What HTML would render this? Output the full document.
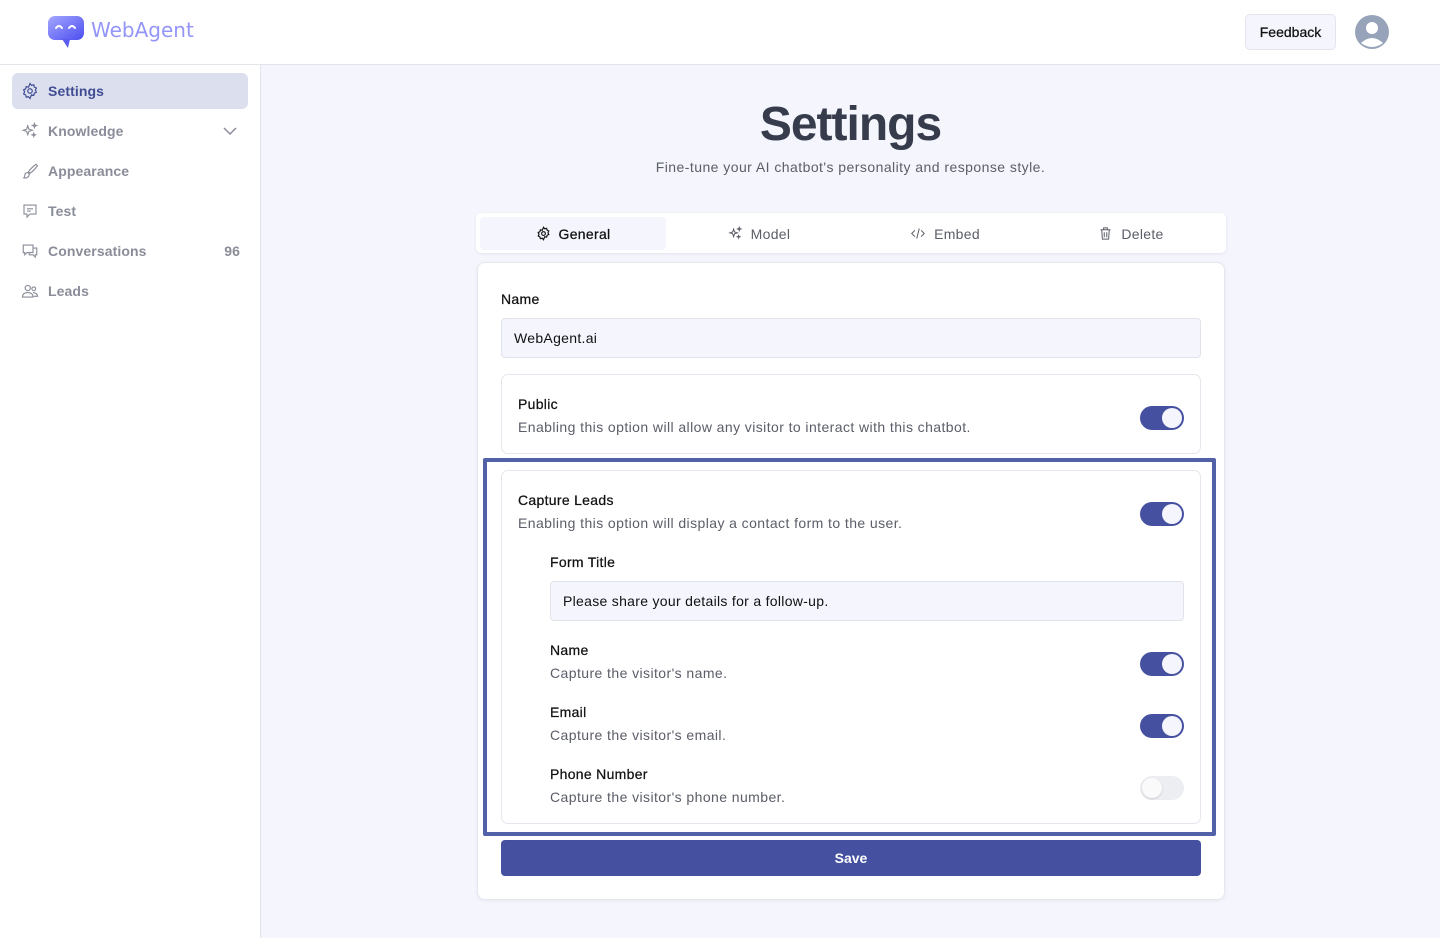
<!DOCTYPE html>
<html><head><style>
*{box-sizing:border-box;margin:0;padding:0}
body{width:1440px;height:938px;font-family:"Liberation Sans",sans-serif;background:#f5f6fd;position:relative;overflow:hidden;color:#111}
.hdr{position:absolute;left:0;top:0;width:1440px;height:65px;background:#fff;border-bottom:1px solid #e3e4ea}
.side{position:absolute;left:0;top:65px;width:261px;height:873px;background:#fff;border-right:1px solid #e3e4ea}
.nav{position:absolute;left:12px;width:236px;height:36px;border-radius:6px;display:flex;align-items:center;padding-left:36px;font-size:14px;color:#8a8d99;font-weight:bold;letter-spacing:.1px}
.nav svg{position:absolute;left:9px;top:9px}
.abs{position:absolute}
.tog{position:absolute;width:44px;height:24px;border-radius:12px;background:#4551a0}
.tog::after{content:"";position:absolute;right:2px;top:2px;width:20px;height:20px;border-radius:50%;background:#f4f5fd}
.tog.off{background:#eceef2}
.tog.off::after{left:2px;right:auto;background:#fafafa;box-shadow:0 1px 2px rgba(0,0,0,.15)}
.lbl{position:absolute;font-size:14px;color:#111;letter-spacing:.3px;-webkit-text-stroke:.25px #111}
.desc{position:absolute;font-size:14px;color:#5b5e68;letter-spacing:.42px}
.inp{position:absolute;background:#f4f5fd;border:1px solid #e1e3ea;border-radius:4px;font-size:14px;padding-left:12px;display:flex;align-items:center;letter-spacing:.3px}
.tab{position:absolute;top:217px;height:33px;display:flex;align-items:center;justify-content:center;font-size:14px;color:#5b5e68;gap:8px;letter-spacing:.3px}
</style></head><body>
<div class="hdr">
 <svg class="abs" style="left:48px;top:15px" width="37" height="34" viewBox="0 0 37 34"><defs><linearGradient id="g" x1="0" y1="0" x2="1" y2="1"><stop offset="0" stop-color="#a4a8ff"/><stop offset="1" stop-color="#4c4df0"/></linearGradient></defs><rect x="0" y="1" width="36" height="24" rx="7" fill="url(#g)"/><path d="M14 24 L20 33 L22 24Z" fill="#5a5cf2"/><path d="M8 13 q3-4 6 0 M21 13 q3-4 6 0" stroke="#fff" stroke-width="2" fill="none" stroke-linecap="round"/></svg>
 <div class="abs" style="left:91px;top:18px;font-size:20px;color:#9396f7;font-family:'DejaVu Sans',sans-serif">WebAgent</div>
 <div class="abs" style="left:1245px;top:14px;width:91px;height:36px;border:1px solid #e3e4ec;border-radius:5px;background:#f5f6fd;font-size:14px;display:flex;align-items:center;justify-content:center;-webkit-text-stroke:.25px #111">Feedback</div>
 <svg class="abs" style="left:1355px;top:15px" width="34" height="34" viewBox="0 0 34 34"><circle cx="17" cy="17" r="17" fill="#97a3b9"/><circle cx="17" cy="13" r="6" fill="#fff"/><path d="M6 28 q11-10 22 0 q-11 8-22 0z" fill="#fff"/></svg>
</div>
<div class="side">
 <div class="nav" style="top:8px;background:#dcdfee;color:#414d93"><svg width="18" height="18" viewBox="0 0 24 24" fill="none" stroke="#414d93" stroke-width="1.6"><circle cx="12" cy="12" r="3"/><path d="M12 2l2 2.5 3-.8.8 3 2.7 1.3-1.3 2.8 1.3 2.8-2.7 1.3-.8 3-3-.8L12 22l-2-2.5-3 .8-.8-3-2.7-1.3 1.3-2.8-1.3-2.8 2.7-1.3.8-3 3 .8z"/></svg>Settings</div>
 <div class="nav" style="top:48px"><svg width="18" height="18" viewBox="0 0 24 24" fill="none" stroke="#8a8d99" stroke-width="1.5"><path d="M9 5l1.5 4.5L15 11l-4.5 1.5L9 17l-1.5-4.5L3 11l4.5-1.5z M18 2l.7 2 2 .7-2 .7-.7 2-.7-2-2-.7 2-.7z M17 15l.6 1.6 1.6.6-1.6.6-.6 1.6-.6-1.6-1.6-.6 1.6-.6z"/></svg>Knowledge<svg style="left:210px;top:10px" width="16" height="16" viewBox="0 0 16 16" fill="none" stroke="#8a8d99" stroke-width="1.5"><path d="M2 5l6 6 6-6"/></svg></div>
 <div class="nav" style="top:88px"><svg width="18" height="18" viewBox="0 0 24 24" fill="none" stroke="#8a8d99" stroke-width="1.5"><path d="M20 3c-4 3-8 7-10 10l2 2c3-2 7-6 10-10z M9 14c-3 0-4 2-4 4s-1 3-2 3c3 1 8 0 8-5z"/></svg>Appearance</div>
 <div class="nav" style="top:128px"><svg width="18" height="18" viewBox="0 0 24 24" fill="none" stroke="#8a8d99" stroke-width="1.5"><path d="M4 4h16v12h-8l-4 4v-4H4z M8 9h8 M8 12h5"/></svg>Test</div>
 <div class="nav" style="top:168px"><svg width="18" height="18" viewBox="0 0 24 24" fill="none" stroke="#8a8d99" stroke-width="1.5"><path d="M3 4h13v10H8l-3 3v-3H3z M16 8h5v9h-2v3l-3-3h-5v-3"/></svg>Conversations<span style="position:absolute;right:8px;color:#8a8d99">96</span></div>
 <div class="nav" style="top:208px"><svg width="18" height="18" viewBox="0 0 24 24" fill="none" stroke="#8a8d99" stroke-width="1.5"><circle cx="9" cy="8" r="3.5"/><circle cx="17" cy="9" r="2.5"/><path d="M2 20c0-4 3-6 7-6s7 2 7 6z M16 14c3 0 6 2 6 5h-5"/></svg>Leads</div>
</div>
<div class="abs" style="left:261px;top:97px;width:1179px;text-align:center;font-size:48px;font-weight:bold;color:#363c4b;letter-spacing:-1px">Settings</div>
<div class="abs" style="left:261px;top:159px;width:1179px;text-align:center;font-size:14px;color:#5b5e68;letter-spacing:.45px">Fine-tune your AI chatbot's personality and response style.</div>
<div class="abs" style="left:476px;top:213px;width:750px;height:40px;background:#fff;border-radius:5px;box-shadow:0 1px 3px rgba(0,0,0,.08)"></div>
<div class="abs" style="left:480px;top:217px;width:186px;height:33px;background:#f4f5fd;border-radius:4px"></div>
<div class="tab" style="left:480px;width:186px;color:#111;-webkit-text-stroke:.25px #111"><svg width="15" height="15" viewBox="0 0 24 24" fill="none" stroke="#111" stroke-width="1.8"><circle cx="12" cy="12" r="3"/><path d="M12 2l2 2.5 3-.8.8 3 2.7 1.3-1.3 2.8 1.3 2.8-2.7 1.3-.8 3-3-.8L12 22l-2-2.5-3 .8-.8-3-2.7-1.3 1.3-2.8-1.3-2.8 2.7-1.3.8-3 3 .8z"/></svg>General</div>
<div class="tab" style="left:666px;width:186px"><svg width="15" height="15" viewBox="0 0 24 24" fill="none" stroke="#5b5e68" stroke-width="1.6"><path d="M9 5l1.5 4.5L15 11l-4.5 1.5L9 17l-1.5-4.5L3 11l4.5-1.5z M18 2l.7 2 2 .7-2 .7-.7 2-.7-2-2-.7 2-.7z M17 15l.6 1.6 1.6.6-1.6.6-.6 1.6-.6-1.6-1.6-.6 1.6-.6z"/></svg>Model</div>
<div class="tab" style="left:852px;width:186px"><svg width="16" height="15" viewBox="0 0 24 24" fill="none" stroke="#5b5e68" stroke-width="1.6"><path d="M7 7l-5 5 5 5 M17 7l5 5-5 5 M14 4l-4 16"/></svg>Embed</div>
<div class="tab" style="left:1038px;width:186px"><svg width="15" height="15" viewBox="0 0 24 24" fill="none" stroke="#5b5e68" stroke-width="1.6"><path d="M4 6h16 M9 6V3h6v3 M6 6l1 15h10l1-15 M10 10v8 M14 10v8"/></svg>Delete</div>
<div class="abs" style="left:477px;top:262px;width:748px;height:638px;background:#fff;border:1px solid #e6e7ee;border-radius:8px;box-shadow:0 1px 4px rgba(0,0,0,.06)"></div>
<div class="lbl" style="left:501px;top:291px">Name</div>
<div class="inp" style="left:501px;top:318px;width:700px;height:40px">WebAgent.ai</div>
<div class="abs" style="left:501px;top:374px;width:700px;height:80px;border:1px solid #e6e7ee;border-radius:7px"></div>
<div class="lbl" style="left:518px;top:396px">Public</div>
<div class="desc" style="left:518px;top:419px">Enabling this option will allow any visitor to interact with this chatbot.</div>
<div class="tog" style="left:1140px;top:406px"></div>
<div class="abs" style="left:483px;top:458px;width:733px;height:378px;border:4px solid #5361a8;border-radius:2px"></div>
<div class="abs" style="left:501px;top:470px;width:700px;height:354px;border:1px solid #e6e7ee;border-radius:7px"></div>
<div class="lbl" style="left:518px;top:492px">Capture Leads</div>
<div class="desc" style="left:518px;top:515px">Enabling this option will display a contact form to the user.</div>
<div class="tog" style="left:1140px;top:502px"></div>
<div class="lbl" style="left:550px;top:554px">Form Title</div>
<div class="inp" style="left:550px;top:581px;width:634px;height:40px">Please share your details for a follow-up.</div>
<div class="lbl" style="left:550px;top:642px">Name</div>
<div class="desc" style="left:550px;top:665px">Capture the visitor's name.</div>
<div class="tog" style="left:1140px;top:652px"></div>
<div class="lbl" style="left:550px;top:704px">Email</div>
<div class="desc" style="left:550px;top:727px">Capture the visitor's email.</div>
<div class="tog" style="left:1140px;top:714px"></div>
<div class="lbl" style="left:550px;top:766px">Phone Number</div>
<div class="desc" style="left:550px;top:789px">Capture the visitor's phone number.</div>
<div class="tog off" style="left:1140px;top:776px"></div>
<div class="abs" style="left:501px;top:840px;width:700px;height:36px;background:#4551a0;border-radius:4px;color:#fff;font-size:14px;font-weight:bold;display:flex;align-items:center;justify-content:center">Save</div>
</body></html>
